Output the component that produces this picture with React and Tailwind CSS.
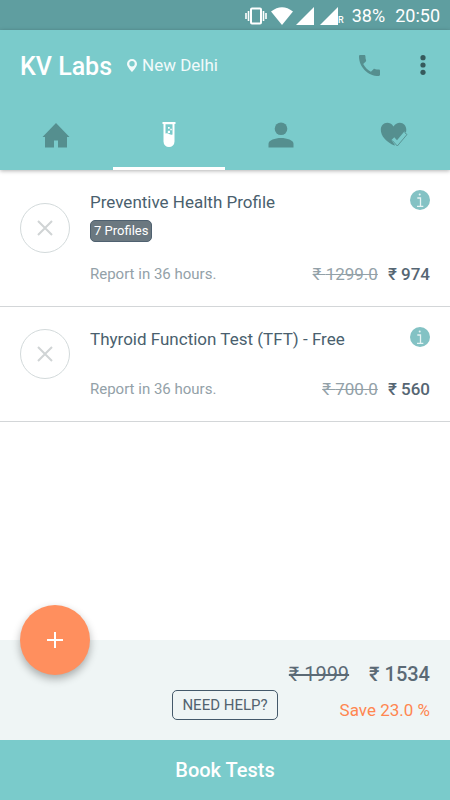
import React, { useState } from 'react';

const initialTests = [
  { id: 1, name: 'Preventive Health Profile', badge: '7 Profiles', report: 'Report in 36 hours.', mrp: '1299.0', price: '974' },
  { id: 2, name: 'Thyroid Function Test (TFT) - Free', badge: null, report: 'Report in 36 hours.', mrp: '700.0', price: '560' },
];

const HomeIcon = () => (
  <svg width="28" height="26" viewBox="0 0 28 26" fill="currentColor">
    <path d="M14 1 27.5 15H25V25.5H16V18.5H12V25.5H3V15H0.5Z" />
  </svg>
);

const TubeIcon = () => (
  <svg width="14" height="26" viewBox="0 0 14 26">
    <path fill="currentColor" fillRule="evenodd" d="M0.5 0H13.5V2H12.5V19.5A5.5 5.5 0 0 1 1.5 19.5V2H0.5ZM3.5 2.2V11.5Q5.5 10.8 7.5 12.2Q9 13 10.5 12.5V2.2Z" />
    <path fill="currentColor" d="M6 5h1.7v1.7H6zM8.3 6.8h1.5v1.5H8.3zM5.8 8.7h2.2v2.2H5.8z" />
  </svg>
);

const PersonIcon = () => (
  <svg width="26" height="26" viewBox="0 0 26 26" fill="currentColor">
    <circle cx="13" cy="6.7" r="6.3" />
    <path d="M0.5 25.5V21.8C0.5 18.2 7 16 13 16S25.5 18.2 25.5 21.8V25.5Z" />
  </svg>
);

const HeartIcon = () => (
  <svg width="28" height="26" viewBox="0 0 28 26">
    <path fill="currentColor" d="M13.5 4.5C11.5 1.5 9.5 0.8 7.3 0.8C3.5 0.8 0.8 3.8 0.8 7.8C0.8 14 6.5 20.5 14.5 23.5C20 19 26.3 14.5 26.3 7.8C26.3 3.8 23.5 0.8 19.8 0.8C17.3 0.8 15.3 2 13.5 4.5Z" />
    <path fill="#7acbcb" d="M11.5 18 14.3 15.3 17 18.3 24.3 9.5 28 12.5V15L17.5 26 15.5 24Z" />
    <path fill="none" stroke="currentColor" strokeWidth="0.9" d="M24.5 10.5 27 12.5 17.3 24 12.3 18.5" />
  </svg>
);

const tabs = [
  { id: 'home', label: 'Home', Icon: HomeIcon },
  { id: 'tests', label: 'Tests', Icon: TubeIcon },
  { id: 'profile', label: 'Profile', Icon: PersonIcon },
  { id: 'health', label: 'Health', Icon: HeartIcon },
];

const StatusBar = () => (
  <div className="h-[30px] bg-[#5f9ea0] text-white flex items-center justify-end pr-[10px] pt-[2px] text-[18px] leading-6">
    <svg width="22" height="18" viewBox="0 0 22 18" className="mr-1">
      <rect x="6" y="1.5" width="10" height="15" rx="1" fill="none" stroke="currentColor" strokeWidth="2" />
      <path d="M3.5 4V14M18.5 4V14M1 6V12M21 6V12" stroke="currentColor" strokeWidth="1.6" />
    </svg>
    <svg width="22" height="18" viewBox="0 0 22 18" className="mr-[3px]" fill="currentColor">
      <path d="M0 4.5Q11 -4 22 4.5L11 18Z" />
    </svg>
    <svg width="18" height="18" viewBox="0 0 18 18" className="mr-[6px]" fill="currentColor">
      <path d="M18 0V18H0Z" />
    </svg>
    <svg width="18" height="18" viewBox="0 0 18 18" fill="currentColor">
      <path d="M18 0V18H0Z" />
    </svg>
    <span className="self-end text-[9px] leading-5 font-medium mr-2">R</span>
    <span className="mr-[10px]">38%</span>
    <span>20:50</span>
  </div>
);

const Header = ({ activeTab, onTabChange }) => (
  <header className="relative bg-[#7acbcb] shadow-[0_1px_4px_rgba(0,0,0,0.3)]">
    <div className="h-[70px] pl-5 pr-6 flex items-center">
      <h1 className="pt-1 text-[25px] leading-8 font-medium text-white">KV Labs</h1>
      <a href="#location" className="ml-[15px] flex items-center gap-[5px] text-[17px] leading-6 text-white/90">
        <svg width="10" height="13" viewBox="0 0 10 13" fill="currentColor">
          <path fillRule="evenodd" d="M5 0A5 5 0 0 0 0 5C0 8 5 13 5 13S10 8 10 5A5 5 0 0 0 5 0ZM5 2A2.7 2.7 0 1 1 5 7.4A2.7 2.7 0 1 1 5 2Z" />
        </svg>
        New Delhi
      </a>
      <button aria-label="Call" className="ml-auto mr-10 text-[#558f8f]">
        <svg width="21" height="21" viewBox="3 3 18 18" fill="currentColor">
          <path d="M6.62 10.79c1.44 2.83 3.76 5.14 6.59 6.59l2.2-2.2c.27-.27.67-.36 1.02-.24 1.12.37 2.33.57 3.57.57.55 0 1 .45 1 1V20c0 .55-.45 1-1 1-9.39 0-17-7.61-17-17 0-.55.45-1 1-1h3.5c.55 0 1 .45 1 1 0 1.25.2 2.45.57 3.57.11.35.03.74-.25 1.02l-2.2 2.2z" />
        </svg>
      </button>
      <button aria-label="More options" className="text-[#365a5c]">
        <svg width="6" height="20" viewBox="0 0 6 20" fill="currentColor">
          <circle cx="3" cy="2.7" r="2.6" />
          <circle cx="3" cy="10" r="2.6" />
          <circle cx="3" cy="17.3" r="2.6" />
        </svg>
      </button>
    </div>
    <nav className="grid grid-cols-4 h-[70px]">
      {tabs.map(({ id, label, Icon }) => (
        <button
          key={id}
          aria-label={label}
          onClick={() => onTabChange(id)}
          className={`flex items-center justify-center border-y-3 border-t-transparent ${activeTab === id ? 'text-white border-b-white' : 'text-[#558f8f] border-b-transparent'}`}
        >
          <Icon />
        </button>
      ))}
    </nav>
  </header>
);

const TestRow = ({ test, onRemove }) => (
  <li className="flex gap-5 px-5 py-5 border-b border-[#d3d6d8]">
    <button
      onClick={() => onRemove(test.id)}
      aria-label={`Remove ${test.name}`}
      className="self-center mb-5 size-[50px] shrink-0 rounded-full border border-[#d3dadb] text-[#d0d4d5] flex items-center justify-center"
    >
      <svg width="16" height="16" viewBox="0 0 16 16" stroke="currentColor" strokeWidth="2">
        <path d="M1 1 15 15M15 1 1 15" />
      </svg>
    </button>
    <div className="flex-1 min-w-0">
      <div className="flex justify-between items-start">
        <h2 className="text-[17px] leading-6 text-[#4a5f6e]">{test.name}</h2>
        <button aria-label="Details" className="shrink-0">
          <svg width="20" height="20" viewBox="0 0 20 20">
            <circle cx="10" cy="10" r="10" fill="#83c2c4" />
            <path d="M7.3 8H10.5V16M7 16.3H13.3" fill="none" stroke="#e6f4f4" strokeWidth="1.3" />
            <circle cx="9.7" cy="4.6" r="1" fill="#e6f4f4" />
          </svg>
        </button>
      </div>
      {test.badge && (
        <div className="mt-[6px] -mb-[6px] flex">
          <span className="h-[22px] px-[3px] rounded-[5px] border border-[#4f6170] bg-[#6b7880] text-white text-[13px] leading-5">{test.badge}</span>
        </div>
      )}
      <div className="mt-7 pb-[2px] flex items-center text-[17px] leading-5">
        <span className="text-[15px] text-[#93a1a8]">{test.report}</span>
        <s className="ml-auto text-[#93a1a8]">₹ {test.mrp}</s>
        <span className="ml-[10px] font-medium text-[#566673]">₹ {test.price}</span>
      </div>
    </div>
  </li>
);

const App = () => {
  const [activeTab, setActiveTab] = useState('tests');
  const [tests, setTests] = useState(initialTests);

  const handleRemove = (id) => {
    setTests(tests.filter(test => test.id !== id));
  };

  return (
    <div className="min-h-screen flex flex-col bg-white font-['Roboto',sans-serif]">
      <StatusBar />
      <Header activeTab={activeTab} onTabChange={setActiveTab} />

      <main className="flex-1">
        <ul>
          {tests.map(test => (
            <TestRow key={test.id} test={test} onRemove={handleRemove} />
          ))}
        </ul>
      </main>

      <footer>
        <div className="relative bg-[#eff5f5] px-5 pt-[22px] pb-[18px]">
          <button
            aria-label="Add test"
            className="absolute left-5 -top-[35px] size-[70px] rounded-full bg-[#ff8f5e] text-white flex items-center justify-center shadow-[0_4px_8px_rgba(0,0,0,0.3)]"
          >
            <svg width="16" height="16" viewBox="0 0 16 16" stroke="currentColor" strokeWidth="2">
              <path d="M8 0V16M0 8H16" />
            </svg>
          </button>
          <div className="flex justify-end gap-5 text-[20px] leading-6 text-[#5b6a75]">
            <s>₹ 1999</s>
            <span className="font-medium">₹ 1534</span>
          </div>
          <div className="mt-1 flex items-start justify-end gap-[62px]">
            <button className="h-[30px] px-[9px] rounded-[5px] border border-[#44596a] text-[15px] leading-5 text-[#53636f]">NEED HELP?</button>
            <span className="pt-2 text-[17px] leading-6 text-[#ff8650]">Save 23.0 %</span>
          </div>
        </div>
        <button className="w-full h-[60px] bg-[#7acbcb] text-white text-[20px] leading-6 font-medium">Book Tests</button>
      </footer>
    </div>
  );
};

export default App;
